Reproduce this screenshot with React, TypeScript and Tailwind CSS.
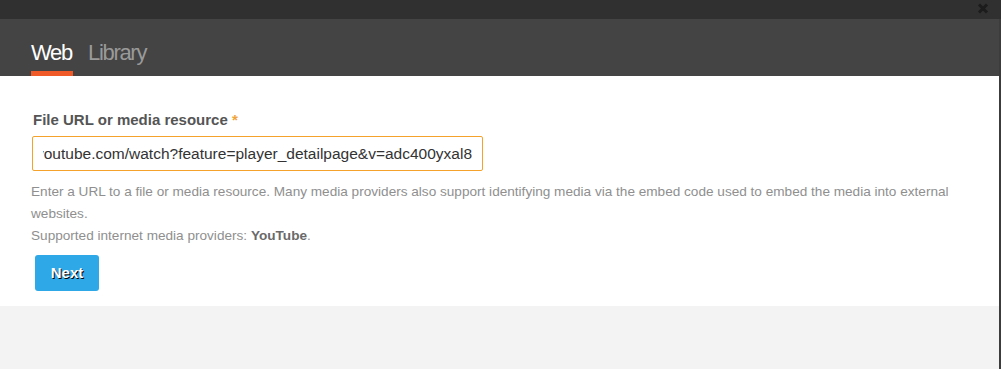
import React from "react";

export default function App() {
  return (
    <div
      className="w-[1001px] h-[369px] flex flex-col bg-[#f3f3f3] overflow-hidden"
      style={{ fontFamily: '"Liberation Sans", Arial, Helvetica, sans-serif' }}
    >
      {/* top bar */}
      <div className="h-[19px] bg-[#303030] flex items-center justify-end pr-[12px] shrink-0">
        <svg width="12" height="11" viewBox="0 0 12 11" className="mt-[-2px]">
          <path d="M2 1.5 L10 9.5 M10 1.5 L2 9.5" stroke="#1c1c1c" strokeWidth="3" strokeLinecap="butt" />
        </svg>
      </div>
      <div className="flex flex-1">
        <div className="w-[999px] flex flex-col">
          {/* tab bar */}
          <div className="h-[57px] bg-[#444444] flex items-end pl-[31px] shrink-0">
            <div className="flex flex-col items-stretch">
              <span className="text-[22px] leading-[22px] tracking-[-1.3px] text-white mb-[7px] pr-[1px]">Web</span>
              <div className="h-[5px] bg-[#ef5a28]" />
            </div>
            <div className="flex flex-col ml-[15px]">
              <span className="text-[22px] leading-[22px] tracking-[-1.3px] text-[#9a9a9a] mb-[7px]">Library</span>
              <div className="h-[5px]" />
            </div>
          </div>
          {/* content */}
          <div className="bg-white pl-[31px] pr-[31px] pt-[34px] pb-[15px]">
            <div className="text-[15px] leading-[20px] font-bold text-[#555555] pl-[2px]">
              File URL or media resource <span className="text-[#f0a43a]">*</span>
            </div>
            <div className="mt-[6px] w-[451px] h-[35px] border border-[#f5a22c] rounded-[2px] flex items-center px-[10px] ml-[1px]">
              <div className="flex-1 overflow-hidden flex justify-end whitespace-nowrap text-[15.5px] text-[#333333]">
                <span>https://www.youtube.com/watch?feature=player_detailpage&amp;v=adc400yxal8</span>
              </div>
            </div>
            <div className="mt-[10px] w-[938px] text-[13.6px] leading-[22px] text-[#8f8f8f]">
              <p>
                Enter a URL to a file or media resource. Many media providers also support identifying media via the embed code used to embed the media into external websites.
              </p>
              <p>
                Supported internet media providers: <span className="font-bold text-[#6a6a6a]">YouTube</span>.
              </p>
            </div>
            <button
              className="mt-[8px] ml-[4px] w-[64px] h-[36px] bg-[#2ea8e6] rounded-[3px] text-white font-bold text-[15px] flex items-center justify-center"
              style={{ textShadow: "1px 1px 0 #000" }}
            >
              Next
            </button>
          </div>
          <div className="flex-1 bg-[#f3f3f3]" />
        </div>
        <div className="w-[2px] bg-[#3c3c3c]" />
      </div>
    </div>
  );
}
